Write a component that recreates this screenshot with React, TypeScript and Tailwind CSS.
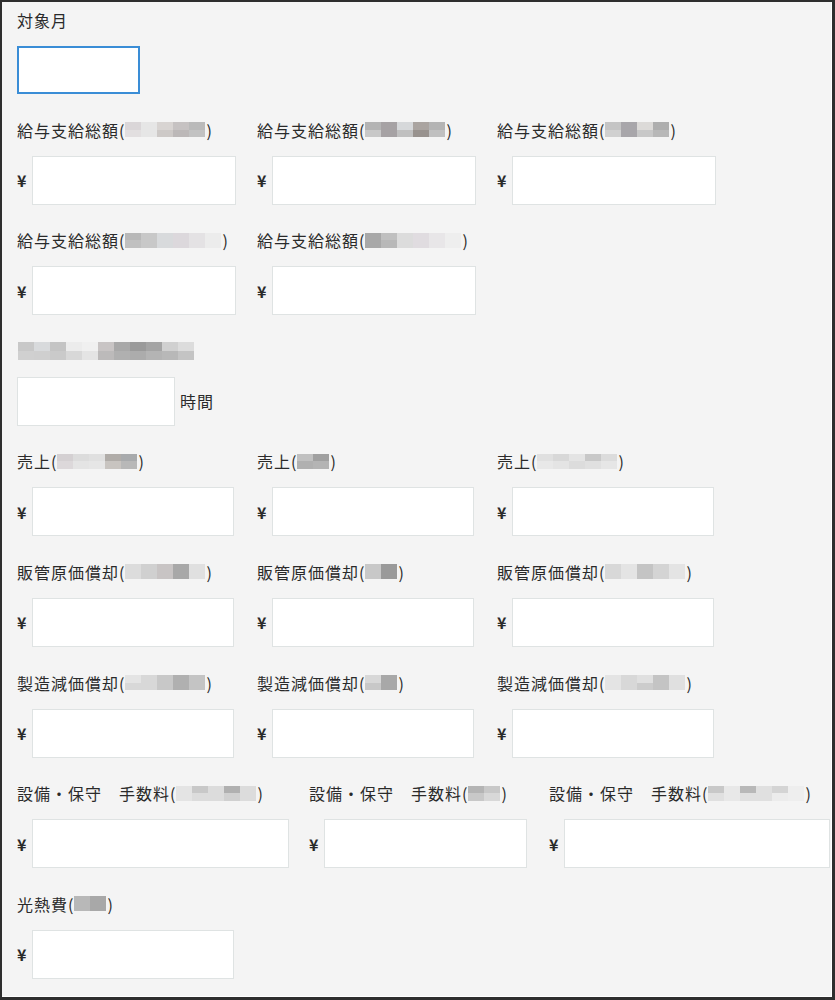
import React from "react";

// pixelated (mosaic) blocks used where the original text was blurred out
function Blur({ cols, h = 15 }: { cols: string[]; h?: number }) {
  return (
    <span className="mx-[1px] inline-flex align-middle" style={{ height: h }}>
      {cols.map((c, i) => {
        const [top, bottom] = c.split("/");
        return (
          <span key={i} className="flex w-[16px] flex-col">
            <span className="flex-1" style={{ background: top }} />
            <span className="flex-1" style={{ background: bottom ?? top }} />
          </span>
        );
      })}
    </span>
  );
}

function Label({ text, blur }: { text: string; blur?: string[] }) {
  return (
    <div className="flex h-5 items-center whitespace-pre text-[16px] leading-5 tracking-[1px] text-[#2a2a2a]">
      <span>{text}</span>
      {blur && (
        <>
          <span className="tracking-normal">(</span>
          <Blur cols={blur} />
          <span className="tracking-normal">)</span>
        </>
      )}
    </div>
  );
}

function Yen({ w = "w-[204px]" }: { w?: string }) {
  return (
    <div className="flex items-center">
      <span className="w-[15px] text-[16px] font-semibold text-[#2a2a2a]">¥</span>
      <div className={`h-[49px] ${w} border border-[#dfe3e3] bg-white`} />
    </div>
  );
}

type F = { label: string; blur: string[] };

function Row({
  fields,
  starts,
  widths,
}: {
  fields: F[];
  starts: string[];
  widths: string[];
}) {
  return (
    <div className="flex">
      {fields.map((f, i) => (
        <div key={i} className={`flex shrink-0 flex-col gap-4 ${starts[i]}`}>
          <Label text={f.label} blur={f.blur} />
          <Yen w={widths[i]} />
        </div>
      ))}
    </div>
  );
}

const stdStarts = ["w-[240px]", "w-[240px]", "w-[240px]"];

export default function App() {
  return (
    <div className="h-[1000px] w-[835px] overflow-hidden border-t-2 border-l-2 border-r-[3px] border-b-[3px] border-[#2e2e2e] bg-[#f4f4f4] font-['Meiryo','Noto_Sans_CJK_JP',sans-serif]">
      <div className="flex h-full flex-col gap-[25.6px] border-r border-b border-white px-[15px] pt-[8px]">
        <div className="flex flex-col gap-4">
          <Label text="対象月" />
          <div className="h-[48px] w-[123px] border-2 border-[#3a8dd6] bg-white" />
        </div>

        <Row
          starts={stdStarts}
          widths={["w-[204px]", "w-[204px]", "w-[204px]"]}
          fields={[
            { label: "給与支給総額", blur: ["#dad6d8/#e2dfe0", "#e6e6e6", "#d8d4d2/#cdc9c7", "#c6c2c2/#bcb8b8", "#bababa/#c2c2c2"] },
            { label: "給与支給総額", blur: ["#b4b4b4/#c8c8c8", "#a6a2a4", "#d6d8da/#c0c0c0", "#aaa4a0/#98928e", "#b4b4b4/#c0c0c0"] },
            { label: "給与支給総額", blur: ["#c4c4c4/#d0d0d0", "#a8a6aa", "#dcdad8/#c8c8c8", "#aeaeae/#b8b8b8"] },
          ]}
        />
        <Row
          starts={stdStarts}
          widths={["w-[204px]", "w-[204px]"]}
          fields={[
            { label: "給与支給総額", blur: ["#b8b8b8/#c0c0c0", "#c8c8c8", "#d8dadc", "#dcd8dc", "#e4e2e4", "#ececec"] },
            { label: "給与支給総額", blur: ["#a8a8a8", "#c0c0c0/#b8b8b8", "#dcdcdc", "#e0dce0", "#e8e6e8", "#eeeeee"] },
          ]}
        />

        <div className="flex flex-col gap-4">
          <div className="flex h-5 items-center">
            <Blur
              h={18}
              cols={[
                "#c8c8c8/#d0d0d0",
                "#d8dadc/#cfcfcf",
                "#c4c4c4/#cacaca",
                "#ececec/#d8d8d8",
                "#f0f0f0/#e4e4e4",
                "#c8c4c4/#bcbaba",
                "#a8a8a8/#b0b0b0",
                "#9a9a9a/#acacac",
                "#a4a4a4/#b4b4b4",
                "#d0d0d0/#b8b8b8",
                "#dcdcdc/#c4c4c4",
              ]}
            />
          </div>
          <div className="flex items-center gap-[5px]">
            <div className="h-[49px] w-[158px] border border-[#dfe3e3] bg-white" />
            <span className="text-[16px] tracking-[1px] text-[#2a2a2a]">時間</span>
          </div>
        </div>

        <Row
          starts={stdStarts}
          widths={["w-[202px]", "w-[202px]", "w-[202px]"]}
          fields={[
            { label: "売上", blur: ["#d4d0d2/#dcd8da", "#dcdcdc/#e4e4e4", "#e0e0e0/#e6e6e6", "#b0aca8/#c8c4c0", "#a8aaac/#b8b8b8"] },
            { label: "売上", blur: ["#c0c0c0/#b0b0b0", "#a0a0a0/#b4b4b4"] },
            { label: "売上", blur: ["#e0e0e0/#e8e8e8", "#d8d8d8/#e4e4e4", "#e4e4e4/#dcdcdc", "#c8c8c8/#e0e0e0", "#dcdcdc/#e6e6e6"] },
          ]}
        />
        <Row
          starts={stdStarts}
          widths={["w-[202px]", "w-[202px]", "w-[202px]"]}
          fields={[
            { label: "販管原価償却", blur: ["#dcdcdc", "#d0d0d0", "#c8c4c4", "#a8a8a8", "#e0e0e0"] },
            { label: "販管原価償却", blur: ["#c8c8c8", "#9a9a9a"] },
            { label: "販管原価償却", blur: ["#d8d8d8", "#e4e4e4", "#c4c4c4", "#d4d4d4", "#e4e4e4"] },
          ]}
        />
        <Row
          starts={stdStarts}
          widths={["w-[202px]", "w-[202px]", "w-[202px]"]}
          fields={[
            { label: "製造減価償却", blur: ["#e4e4e4/#d8d8d8", "#d8d8d8", "#c8c8c8", "#b0b0b0", "#c4c4c4"] },
            { label: "製造減価償却", blur: ["#d8d8d8/#c8c8c8", "#a8a8a8"] },
            { label: "製造減価償却", blur: ["#e4e4e4", "#d8d8d8", "#e0e0e0/#cccccc", "#c4c4c4", "#e0e0e0"] },
          ]}
        />
        <Row
          starts={["w-[292px]", "w-[240px]", "w-[281px]"]}
          widths={["w-[257px]", "w-[203px]", "w-[266px]"]}
          fields={[
            { label: "設備・保守　手数料", blur: ["#e4e4e4", "#c8c8c8/#dcdcdc", "#dcdcdc", "#b0b0b0/#d0d0d0", "#dcdcdc"] },
            { label: "設備・保守　手数料", blur: ["#b4b4b4/#c8c8c8", "#c8c8c8/#d8d8d8"] },
            { label: "設備・保守　手数料", blur: ["#c8c8c8/#e0e0e0", "#e8e8e8", "#b8b8b8/#e0e0e0", "#e0e0e0", "#d4d4d4/#ececec", "#eeeeee"] },
          ]}
        />
        <Row
          starts={["w-[240px]"]}
          widths={["w-[202px]"]}
          fields={[{ label: "光熱費", blur: ["#b8b8b8", "#a8a8a8"] }]}
        />
      </div>
    </div>
  );
}
